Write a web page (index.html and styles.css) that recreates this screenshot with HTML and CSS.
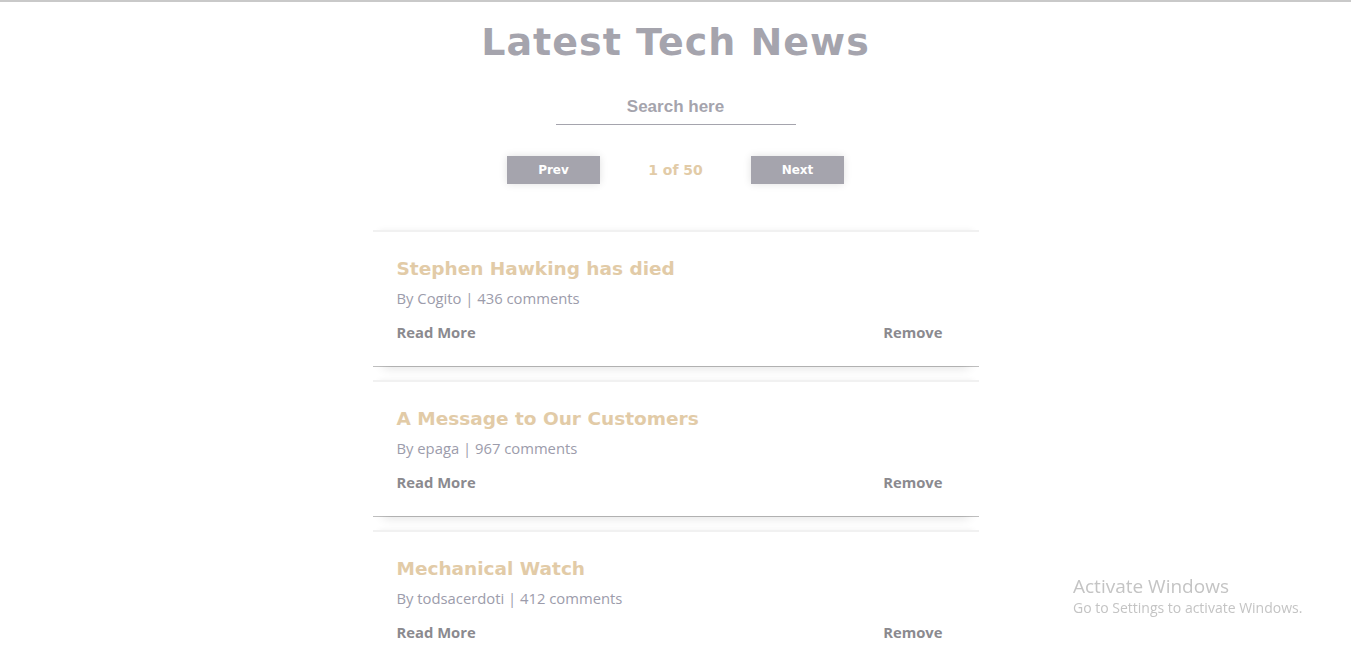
FILE: index.html
```
<!DOCTYPE html>
<html lang="en">
<head>
<meta charset="utf-8">
<title>Latest Tech News</title>
<link rel="stylesheet" href="styles.css">
</head>
<body>
<div class="page">
  <h1 class="title">Latest Tech News</h1>
  <div class="search">
    <input class="search-input" type="text" placeholder="Search here">
  </div>
  <div class="pager">
    <button class="pager-btn">Prev</button>
    <span class="pager-info">1 of 50</span>
    <button class="pager-btn">Next</button>
  </div>
  <div class="list">
    <div class="card">
      <h2 class="card-title">Stephen Hawking has died</h2>
      <p class="card-meta">By Cogito | 436 comments</p>
      <div class="card-actions">
        <a class="card-link">Read More</a>
        <a class="card-link">Remove</a>
      </div>
    </div>
    <div class="card">
      <h2 class="card-title">A Message to Our Customers</h2>
      <p class="card-meta">By epaga | 967 comments</p>
      <div class="card-actions">
        <a class="card-link">Read More</a>
        <a class="card-link">Remove</a>
      </div>
    </div>
    <div class="card">
      <h2 class="card-title">Mechanical Watch</h2>
      <p class="card-meta">By todsacerdoti | 412 comments</p>
      <div class="card-actions">
        <a class="card-link">Read More</a>
        <a class="card-link">Remove</a>
      </div>
    </div>
  </div>
</div>
<div class="watermark">
  <div class="wm-title">Activate Windows</div>
  <div class="wm-sub">Go to Settings to activate Windows.</div>
</div>
</body>
</html>
```
FILE: styles.css
```
html, body {
  margin: 0;
  padding: 0;
  background: #ffffff;
  overflow: hidden;
}
body {
  border-top: 2px solid #c9c9c9;
  font-family: "Open Sans", "Noto Sans", sans-serif;
}
.page {
  display: flex;
  flex-direction: column;
  align-items: center;
}
.title {
  margin: 18px 0 0 0;
  font-family: "DejaVu Sans", sans-serif;
  font-weight: bold;
  font-size: 38px;
  line-height: 44px;
  letter-spacing: 1px;
  color: #a5a4ad;
}
.search {
  margin-top: 31px;
}
.search-input {
  width: 240px;
  height: 30px;
  box-sizing: border-box;
  border: none;
  border-bottom: 1px solid #a5a4ad;
  outline: none;
  text-align: center;
  font-family: "Liberation Sans", Arial, sans-serif;
  font-weight: bold;
  font-size: 17px;
  color: #a5a4ad;
  padding: 0 0 5px 0;
  background: transparent;
}
.search-input::placeholder {
  color: #a5a4ad;
  opacity: 1;
}
.pager {
  margin-top: 31px;
  display: flex;
  align-items: center;
}
.pager-btn {
  width: 93px;
  height: 28px;
  border: none;
  background: #a5a4ad;
  color: #ffffff;
  font-family: "DejaVu Sans", sans-serif;
  font-weight: bold;
  font-size: 12px;
  box-shadow: 0 0 8px rgba(0,0,0,0.12);
  padding: 0;
}
.pager-info {
  width: 151px;
  text-align: center;
  font-family: "DejaVu Sans", sans-serif;
  font-weight: bold;
  font-size: 14px;
  color: #e2cba7;
}
.list {
  margin-top: 46px;
  width: 606px;
  display: flex;
  flex-direction: column;
  gap: 14px;
}
.card {
  height: 136px;
  box-sizing: border-box;
  padding: 24px 36px 0 24px;
  background: #ffffff;
  border-top: 2px solid #f1f1f1;
  box-shadow: 0 1px 0 rgba(0,0,0,0.25), 0 12px 10px -10px rgba(0,0,0,0.12), 0 -6px 6px -6px rgba(0,0,0,0.06);
}
.card-title {
  margin: 0;
  font-family: "DejaVu Sans", sans-serif;
  font-weight: bold;
  font-size: 18.5px;
  line-height: 26px;
  color: #e2cba7;
}
.card-meta {
  margin: 6px 0 0 0;
  font-size: 14.8px;
  line-height: 20px;
  color: #9c9cab;
}
.card-actions {
  margin-top: 14px;
  display: flex;
  justify-content: space-between;
}
.card-link {
  font-weight: bold;
  font-size: 14.8px;
  line-height: 20px;
  color: #8b8a8f;
}
.watermark {
  position: fixed;
  left: 1073px;
  top: 574px;
  color: #c4c4c4;
  font-family: "Open Sans", "Noto Sans", sans-serif;
}
.wm-title {
  font-size: 19px;
  line-height: 24px;
}
.wm-sub {
  font-size: 14px;
  line-height: 20px;
}
```
